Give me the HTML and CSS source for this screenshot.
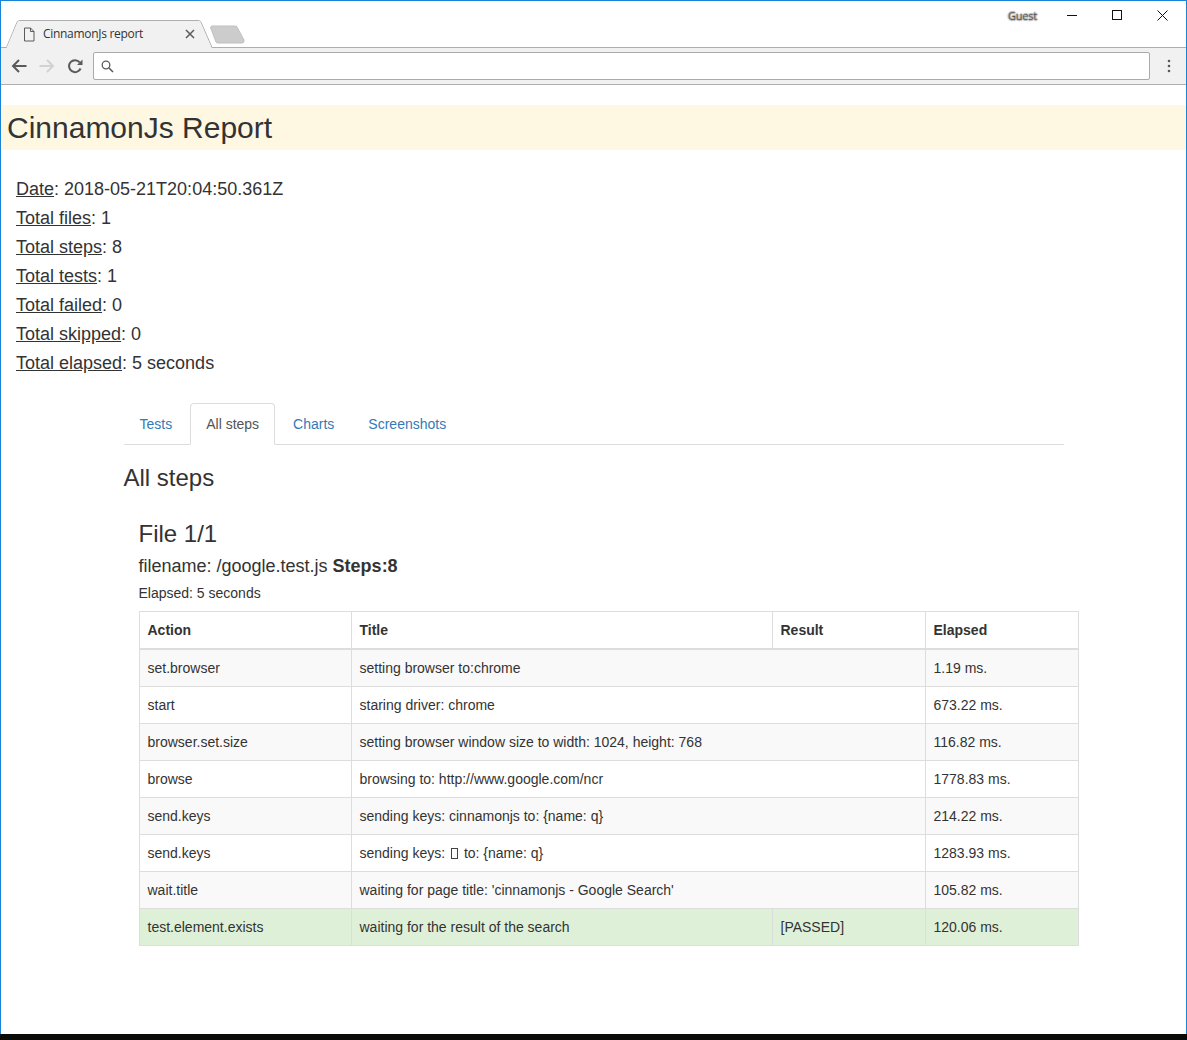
FILE: index.html
```html
<!DOCTYPE html>
<html lang="en">
<head>
<meta charset="utf-8">
<title>CinnamonJs report</title>
<link rel="stylesheet" href="styles.css">
</head>
<body>
<div class="window">
  <header class="titlebar">
    <svg class="tab-shape" width="246" height="30" viewBox="0 0 246 30">
      <path d="M0.5 28.5H5.5L16 3.2Q17 1.5 19 1.5H197Q199 1.5 200 3.2L211 28.5H246" fill="#f1f1f1" stroke="#aeaeae"/>
      <path d="M1 29H5.6L16.4 3.4Q17.2 2 19 2H197Q198.8 2 199.6 3.4L210.6 29Z" fill="#f1f1f1"/>
      <path d="M209.500 8.500Q209.500 7 211.500 7H234.500Q235.500 7 236 8L243 21Q243.500 24 241 24H217Q215.500 24 215 23Z" fill="#cccccc" stroke="#c0c0c0"/>
    </svg>
    <svg class="tab-page" width="12" height="15" viewBox="0 0 12 15"><path d="M1.500 1H7.500L11 4.500V14H1.500ZM7.500 1V4.500H11" fill="none" stroke="#5a5a5a"/></svg>
    <span class="tab-title">CinnamonJs report</span>
    <svg class="tab-close" width="10" height="10" viewBox="0 0 10 10"><path d="M1 1L9 9M9 1L1 9" stroke="#5a5a5a" stroke-width="1.500"/></svg>
    <span class="guest">Guest</span>
    <div class="win-controls">
      <svg width="10" height="10" viewBox="0 0 10 10"><path d="M0 5.500H10" stroke="#111"/></svg>
      <svg width="10" height="10" viewBox="0 0 10 10"><rect x="0.500" y="0.500" width="9" height="9" fill="none" stroke="#111"/></svg>
      <svg width="11" height="11" viewBox="0 0 11 11"><path d="M0.500 0.500L10.500 10.500M10.500 0.500L0.500 10.500" stroke="#111"/></svg>
    </div>
  </header>
  <nav class="toolbar">
    <svg class="nav-icon" width="16" height="14" viewBox="0 0 16 14"><path d="M15.500 7H2M8 1L2 7L8 13" fill="none" stroke="#5a5a5a" stroke-width="2"/></svg>
    <svg class="nav-icon" width="16" height="14" viewBox="0 0 16 14"><path d="M0.500 7H14M8 1L14 7L8 13" fill="none" stroke="#d2d2d2" stroke-width="2"/></svg>
    <svg class="nav-icon" width="15" height="15" viewBox="0 0 15 15"><path d="M12.600 9.500A6 6 0 1 1 11.700 3.300" fill="none" stroke="#5a5a5a" stroke-width="2"/><path d="M9 5.900H14.500V0.500Z" fill="#5a5a5a"/></svg>
    <div class="omnibox">
      <svg width="13" height="13" viewBox="0 0 13 13"><circle cx="5" cy="5" r="3.800" fill="none" stroke="#5a5a5a" stroke-width="1.300"/><path d="M8 8L12 12" stroke="#5a5a5a" stroke-width="1.600"/></svg>
    </div>
    <svg class="menu-dots" width="4" height="14" viewBox="0 0 4 14"><circle cx="2" cy="2" r="1.300" fill="#5a5a5a"/><circle cx="2" cy="7" r="1.300" fill="#5a5a5a"/><circle cx="2" cy="12" r="1.300" fill="#5a5a5a"/></svg>
  </nav>
  <main class="page">
    <h1 class="report-title">CinnamonJs Report</h1>
    <ul class="stats">
      <li><u>Date</u>: 2018-05-21T20:04:50.361Z</li>
      <li><u>Total files</u>: 1</li>
      <li><u>Total steps</u>: 8</li>
      <li><u>Total tests</u>: 1</li>
      <li><u>Total failed</u>: 0</li>
      <li><u>Total skipped</u>: 0</li>
      <li><u>Total elapsed</u>: 5 seconds</li>
    </ul>
    <section class="container">
      <ul class="tabs">
        <li><a href="#tests">Tests</a></li>
        <li class="active"><a href="#steps">All steps</a></li>
        <li><a href="#charts">Charts</a></li>
        <li><a href="#screens">Screenshots</a></li>
      </ul>
      <h3 class="section-title">All steps</h3>
      <div class="file">
        <h3 class="file-title">File 1/1</h3>
        <h4 class="file-name">filename: /google.test.js <b>Steps:8</b></h4>
        <p class="file-elapsed">Elapsed: 5 seconds</p>
        <table class="steps">
          <colgroup><col class="c1"><col class="c2"><col class="c3"><col class="c4"></colgroup>
          <thead>
            <tr><th>Action</th><th>Title</th><th>Result</th><th>Elapsed</th></tr>
          </thead>
          <tbody>
            <tr><td>set.browser</td><td colspan="2">setting browser to:chrome</td><td>1.19 ms.</td></tr>
            <tr><td>start</td><td colspan="2">staring driver: chrome</td><td>673.22 ms.</td></tr>
            <tr><td>browser.set.size</td><td colspan="2">setting browser window size to width: 1024, height: 768</td><td>116.82 ms.</td></tr>
            <tr><td>browse</td><td colspan="2">browsing to: http://www.google.com/ncr</td><td>1778.83 ms.</td></tr>
            <tr><td>send.keys</td><td colspan="2">sending keys: cinnamonjs to: {name: q}</td><td>214.22 ms.</td></tr>
            <tr><td>send.keys</td><td colspan="2">sending keys: <span class="tofu"></span> to: {name: q}</td><td>1283.93 ms.</td></tr>
            <tr><td>wait.title</td><td colspan="2">waiting for page title: 'cinnamonjs - Google Search'</td><td>105.82 ms.</td></tr>
            <tr class="success"><td>test.element.exists</td><td>waiting for the result of the search</td><td>[PASSED]</td><td>120.06 ms.</td></tr>
          </tbody>
        </table>
      </div>
    </section>
  </main>
</div>
<div class="taskbar"></div>
</body>
</html>
```
FILE: styles.css
```css
* { box-sizing: border-box; }
html, body { margin: 0; padding: 0; height: 1040px; overflow: hidden; }
body { background: #000; font-family: "Liberation Sans", Arial, sans-serif; color: #333; font-size: 14px; line-height: 20px; }
.window { height: 1034px; background: #fff; border: 1px solid #1883d7; border-bottom: 0; display: flex; flex-direction: column; overflow: hidden; }
.taskbar { height: 6px; background: #0a0a08; }

.titlebar { position: relative; height: 47px; flex: none; border-bottom: 1px solid #aeaeae; }
.tab-shape { position: absolute; left: 0; top: 18px; }
.tab-page { position: absolute; left: 22px; top: 26px; }
.tab-title { position: absolute; left: 42px; top: 24px; font-family: "Open Sans", sans-serif; font-size: 12px; line-height: 18px; letter-spacing: -0.3px; color: #333; }
.tab-close { position: absolute; left: 184px; top: 28px; }
.guest { position: absolute; left: 1007px; top: 7px; font-family: "Open Sans", sans-serif; font-size: 11px; letter-spacing: -0.2px; line-height: 16px; color: #555; text-shadow: 0 0 2px #fff, 1px 0 1px #999, -1px 0 1px #999, 0 1px 1px #999, 0 -1px 1px #999; }
.win-controls { position: absolute; left: 1066px; top: 9px; display: flex; gap: 35px; align-items: flex-start; }

.toolbar { height: 37px; flex: none; display: flex; align-items: center; background: #f1f1f1; border-bottom: 1px solid #aeaeae; padding: 0 15px 0 10px; gap: 12px; }
.nav-icon { flex: none; }
.nav-icon:nth-child(3) { margin-left: 1px; }
.omnibox { flex: 1; height: 28px; margin-left: -2px; background: #fff; border: 1px solid #aaa; border-radius: 2px; display: flex; align-items: center; padding-left: 7px; }
.menu-dots { flex: none; margin-left: 5px; }

.page { flex: 1; padding: 20px 0 0 1px; }
.report-title { margin: 0; height: 45px; padding: 6px 5px; background: #fef8e3; font-size: 30px; font-weight: 500; line-height: 33px; }
.stats { list-style: none; margin: 0; padding: 25px 0 0 14px; font-size: 18px; line-height: 29px; }
.container { width: 940px; margin: 25px 0 0 121.5px; }
.tabs { list-style: none; margin: 0; padding: 0; display: flex; border-bottom: 1px solid #ddd; height: 42px; }
.tabs li { margin-right: 2px; height: 42px; }
.tabs a { display: block; height: 41px; padding: 10px 15px; border: 1px solid transparent; border-radius: 4px 4px 0 0; color: #337ab7; text-decoration: none; }
.tabs .active a { height: 42px; color: #555; background: #fff; border-color: #ddd #ddd #fff; }
.section-title { margin: 20px 0 10px; font-size: 24px; font-weight: 500; line-height: 26.4px; }
.file { width: 940px; padding: 20px 0 0 15px; }
.file-title { margin: 0 0 9px; font-size: 24px; font-weight: 500; line-height: 26.4px; }
.file-name { margin: 0 0 6px; font-size: 18px; font-weight: 500; line-height: 19.8px; }
.file-elapsed { margin: 0 0 8px; }
.steps { width: 939px; table-layout: fixed; border-collapse: collapse; border: 1px solid #ddd; }
.c1 { width: 212px; } .c2 { width: 421px; } .c3 { width: 153px; } .c4 { width: 153px; }
.steps th, .steps td { padding: 8px; border: 1px solid #ddd; text-align: left; vertical-align: top; line-height: 20px; }
.steps th { border-bottom-width: 2px; font-weight: 700; }
.steps tbody tr:nth-child(odd) { background: #f9f9f9; }
.steps tbody tr.success { background: #dff0d8; }
.tofu { display: inline-block; width: 7px; height: 11px; border: 1px solid #444; vertical-align: -1px; margin: 0 2.5px 0 1.5px; }
```
